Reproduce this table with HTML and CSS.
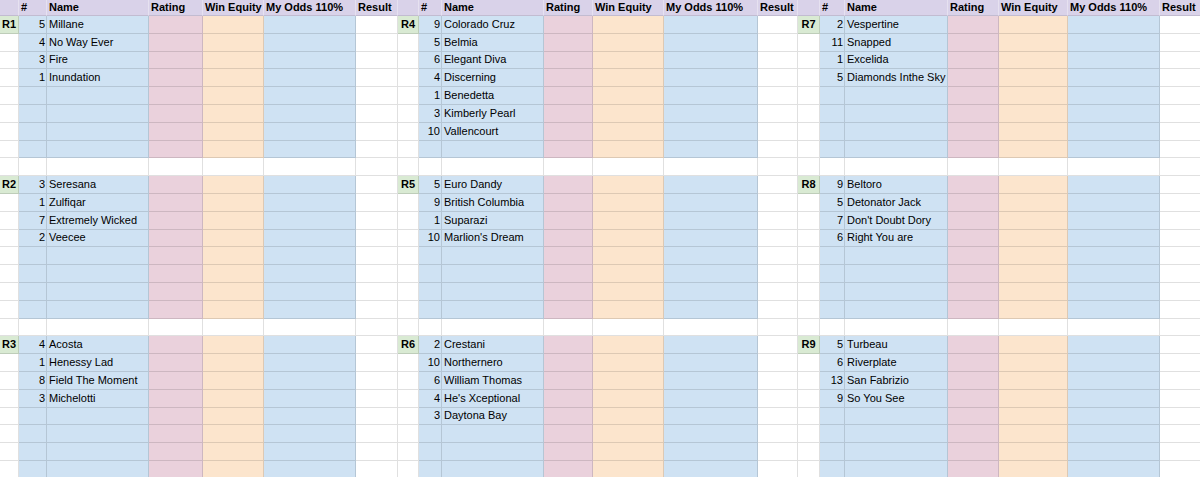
FILE: index.html
```html
<!DOCTYPE html>
<html lang="en">
<head>
<meta charset="utf-8">
<title>Race sheet</title>
<link rel="stylesheet" href="styles.css">
</head>
<body>
<table class="sheet">
<colgroup>
<col class="c-lbl w19"><col class="c-num w28"><col class="c-name w102"><col class="c-rating w54"><col class="c-win w61"><col class="c-odds w92"><col class="c-res w42">
<col class="c-lbl w21"><col class="c-num w23"><col class="c-name w102"><col class="c-rating w49"><col class="c-win w71"><col class="c-odds w94"><col class="c-res w40">
<col class="c-lbl w22"><col class="c-num w25"><col class="c-name w103"><col class="c-rating w51"><col class="c-win w69"><col class="c-odds w92"><col class="c-res w45">
</colgroup>
<thead>
<tr class="head">
<th></th><th>#</th><th>Name</th><th>Rating</th><th>Win Equity</th><th>My Odds 110%</th><th>Result</th>
<th></th><th>#</th><th>Name</th><th>Rating</th><th>Win Equity</th><th>My Odds 110%</th><th>Result</th>
<th></th><th>#</th><th>Name</th><th>Rating</th><th>Win Equity</th><th>My Odds 110%</th><th>Result</th>
</tr>
</thead>
<tbody>
<tr>
<td class="lbl">R1</td><td class="n">5</td><td>Millane</td><td></td><td></td><td></td><td></td>
<td class="lbl">R4</td><td class="n">9</td><td>Colorado Cruz</td><td></td><td></td><td></td><td></td>
<td class="lbl">R7</td><td class="n">2</td><td>Vespertine</td><td></td><td></td><td></td><td></td>
</tr>
<tr>
<td></td><td class="n">4</td><td>No Way Ever</td><td></td><td></td><td></td><td></td>
<td></td><td class="n">5</td><td>Belmia</td><td></td><td></td><td></td><td></td>
<td></td><td class="n">11</td><td>Snapped</td><td></td><td></td><td></td><td></td>
</tr>
<tr>
<td></td><td class="n">3</td><td>Fire</td><td></td><td></td><td></td><td></td>
<td></td><td class="n">6</td><td>Elegant Diva</td><td></td><td></td><td></td><td></td>
<td></td><td class="n">1</td><td>Excelida</td><td></td><td></td><td></td><td></td>
</tr>
<tr>
<td></td><td class="n">1</td><td>Inundation</td><td></td><td></td><td></td><td></td>
<td></td><td class="n">4</td><td>Discerning</td><td></td><td></td><td></td><td></td>
<td></td><td class="n">5</td><td>Diamonds Inthe Sky</td><td></td><td></td><td></td><td></td>
</tr>
<tr>
<td></td><td class="n"></td><td></td><td></td><td></td><td></td><td></td>
<td></td><td class="n">1</td><td>Benedetta</td><td></td><td></td><td></td><td></td>
<td></td><td class="n"></td><td></td><td></td><td></td><td></td><td></td>
</tr>
<tr>
<td></td><td class="n"></td><td></td><td></td><td></td><td></td><td></td>
<td></td><td class="n">3</td><td>Kimberly Pearl</td><td></td><td></td><td></td><td></td>
<td></td><td class="n"></td><td></td><td></td><td></td><td></td><td></td>
</tr>
<tr>
<td></td><td class="n"></td><td></td><td></td><td></td><td></td><td></td>
<td></td><td class="n">10</td><td>Vallencourt</td><td></td><td></td><td></td><td></td>
<td></td><td class="n"></td><td></td><td></td><td></td><td></td><td></td>
</tr>
<tr>
<td></td><td></td><td></td><td></td><td></td><td></td><td></td>
<td></td><td></td><td></td><td></td><td></td><td></td><td></td>
<td></td><td></td><td></td><td></td><td></td><td></td><td></td>
</tr>
<tr class="sep">
<td></td><td></td><td></td><td></td><td></td><td></td><td></td>
<td></td><td></td><td></td><td></td><td></td><td></td><td></td>
<td></td><td></td><td></td><td></td><td></td><td></td><td></td>
</tr>
<tr>
<td class="lbl">R2</td><td class="n">3</td><td>Seresana</td><td></td><td></td><td></td><td></td>
<td class="lbl">R5</td><td class="n">5</td><td>Euro Dandy</td><td></td><td></td><td></td><td></td>
<td class="lbl">R8</td><td class="n">9</td><td>Beltoro</td><td></td><td></td><td></td><td></td>
</tr>
<tr>
<td></td><td class="n">1</td><td>Zulfiqar</td><td></td><td></td><td></td><td></td>
<td></td><td class="n">9</td><td>British Columbia</td><td></td><td></td><td></td><td></td>
<td></td><td class="n">5</td><td>Detonator Jack</td><td></td><td></td><td></td><td></td>
</tr>
<tr>
<td></td><td class="n">7</td><td>Extremely Wicked</td><td></td><td></td><td></td><td></td>
<td></td><td class="n">1</td><td>Suparazi</td><td></td><td></td><td></td><td></td>
<td></td><td class="n">7</td><td>Don't Doubt Dory</td><td></td><td></td><td></td><td></td>
</tr>
<tr>
<td></td><td class="n">2</td><td>Veecee</td><td></td><td></td><td></td><td></td>
<td></td><td class="n">10</td><td>Marlion's Dream</td><td></td><td></td><td></td><td></td>
<td></td><td class="n">6</td><td>Right You are</td><td></td><td></td><td></td><td></td>
</tr>
<tr>
<td></td><td></td><td></td><td></td><td></td><td></td><td></td>
<td></td><td></td><td></td><td></td><td></td><td></td><td></td>
<td></td><td></td><td></td><td></td><td></td><td></td><td></td>
</tr>
<tr>
<td></td><td></td><td></td><td></td><td></td><td></td><td></td>
<td></td><td></td><td></td><td></td><td></td><td></td><td></td>
<td></td><td></td><td></td><td></td><td></td><td></td><td></td>
</tr>
<tr>
<td></td><td></td><td></td><td></td><td></td><td></td><td></td>
<td></td><td></td><td></td><td></td><td></td><td></td><td></td>
<td></td><td></td><td></td><td></td><td></td><td></td><td></td>
</tr>
<tr>
<td></td><td></td><td></td><td></td><td></td><td></td><td></td>
<td></td><td></td><td></td><td></td><td></td><td></td><td></td>
<td></td><td></td><td></td><td></td><td></td><td></td><td></td>
</tr>
<tr class="sep">
<td></td><td></td><td></td><td></td><td></td><td></td><td></td>
<td></td><td></td><td></td><td></td><td></td><td></td><td></td>
<td></td><td></td><td></td><td></td><td></td><td></td><td></td>
</tr>
<tr>
<td class="lbl">R3</td><td class="n">4</td><td>Acosta</td><td></td><td></td><td></td><td></td>
<td class="lbl">R6</td><td class="n">2</td><td>Crestani</td><td></td><td></td><td></td><td></td>
<td class="lbl">R9</td><td class="n">5</td><td>Turbeau</td><td></td><td></td><td></td><td></td>
</tr>
<tr>
<td></td><td class="n">1</td><td>Henessy Lad</td><td></td><td></td><td></td><td></td>
<td></td><td class="n">10</td><td>Northernero</td><td></td><td></td><td></td><td></td>
<td></td><td class="n">6</td><td>Riverplate</td><td></td><td></td><td></td><td></td>
</tr>
<tr>
<td></td><td class="n">8</td><td>Field The Moment</td><td></td><td></td><td></td><td></td>
<td></td><td class="n">6</td><td>William Thomas</td><td></td><td></td><td></td><td></td>
<td></td><td class="n">13</td><td>San Fabrizio</td><td></td><td></td><td></td><td></td>
</tr>
<tr>
<td></td><td class="n">3</td><td>Michelotti</td><td></td><td></td><td></td><td></td>
<td></td><td class="n">4</td><td>He's Xceptional</td><td></td><td></td><td></td><td></td>
<td></td><td class="n">9</td><td>So You See</td><td></td><td></td><td></td><td></td>
</tr>
<tr>
<td></td><td></td><td></td><td></td><td></td><td></td><td></td>
<td></td><td class="n">3</td><td>Daytona Bay</td><td></td><td></td><td></td><td></td>
<td></td><td></td><td></td><td></td><td></td><td></td><td></td>
</tr>
<tr>
<td></td><td></td><td></td><td></td><td></td><td></td><td></td>
<td></td><td></td><td></td><td></td><td></td><td></td><td></td>
<td></td><td></td><td></td><td></td><td></td><td></td><td></td>
</tr>
<tr>
<td></td><td></td><td></td><td></td><td></td><td></td><td></td>
<td></td><td></td><td></td><td></td><td></td><td></td><td></td>
<td></td><td></td><td></td><td></td><td></td><td></td><td></td>
</tr>
<tr>
<td></td><td></td><td></td><td></td><td></td><td></td><td></td>
<td></td><td></td><td></td><td></td><td></td><td></td><td></td>
<td></td><td></td><td></td><td></td><td></td><td></td><td></td>
</tr>
</tbody>
</table>
</body>
</html>
```
FILE: styles.css
```css
html, body {
  margin: 0;
  padding: 0;
  background: #ffffff;
  overflow: hidden;
}

.sheet {
  table-layout: fixed;
  width: 1204px;
  border-collapse: separate;
  border-spacing: 0;
  font-family: "Liberation Sans", Arial, sans-serif;
  font-size: 11px;
  line-height: 13px;
  color: #000000;
}

.w19 { width: 19px; }
.w21 { width: 21px; }
.w22 { width: 22px; }
.w23 { width: 23px; }
.w25 { width: 25px; }
.w28 { width: 28px; }
.w40 { width: 40px; }
.w42 { width: 42px; }
.w45 { width: 45px; }
.w49 { width: 49px; }
.w51 { width: 51px; }
.w54 { width: 54px; }
.w61 { width: 61px; }
.w69 { width: 69px; }
.w71 { width: 71px; }
.w92 { width: 92px; }
.w94 { width: 94px; }
.w102 { width: 102px; }
.w103 { width: 103px; }

.c-lbl { background: #ffffff; }
.c-num { background: #cfe2f3; }
.c-name { background: #cfe2f3; }
.c-rating { background: #ead1dc; }
.c-win { background: #fce5cd; }
.c-odds { background: #cfe2f3; }
.c-res { background: #ffffff; }

.sheet th,
.sheet td {
  padding: 0 1px 0 2px;
  white-space: nowrap;
  overflow: hidden;
  vertical-align: middle;
  text-align: left;
  border-right: 1px solid rgba(0, 0, 0, 0.12);
  border-bottom: 1px solid rgba(0, 0, 0, 0.12);
}

.head {
  height: 16px;
  background: #d9d2e9;
}

.head th {
  font-weight: bold;
  border-right-color: rgba(255, 255, 255, 0.35);
  border-bottom-color: rgba(0, 0, 0, 0.1);
}

.sheet tbody tr {
  height: 17.8px;
}

.sheet tbody tr.sep {
  background: #ffffff;
}

.sheet td.n {
  text-align: right;
}

.sheet td.lbl {
  background: #d9ead3;
  font-weight: bold;
  text-align: center;
  padding: 0;
}
```
